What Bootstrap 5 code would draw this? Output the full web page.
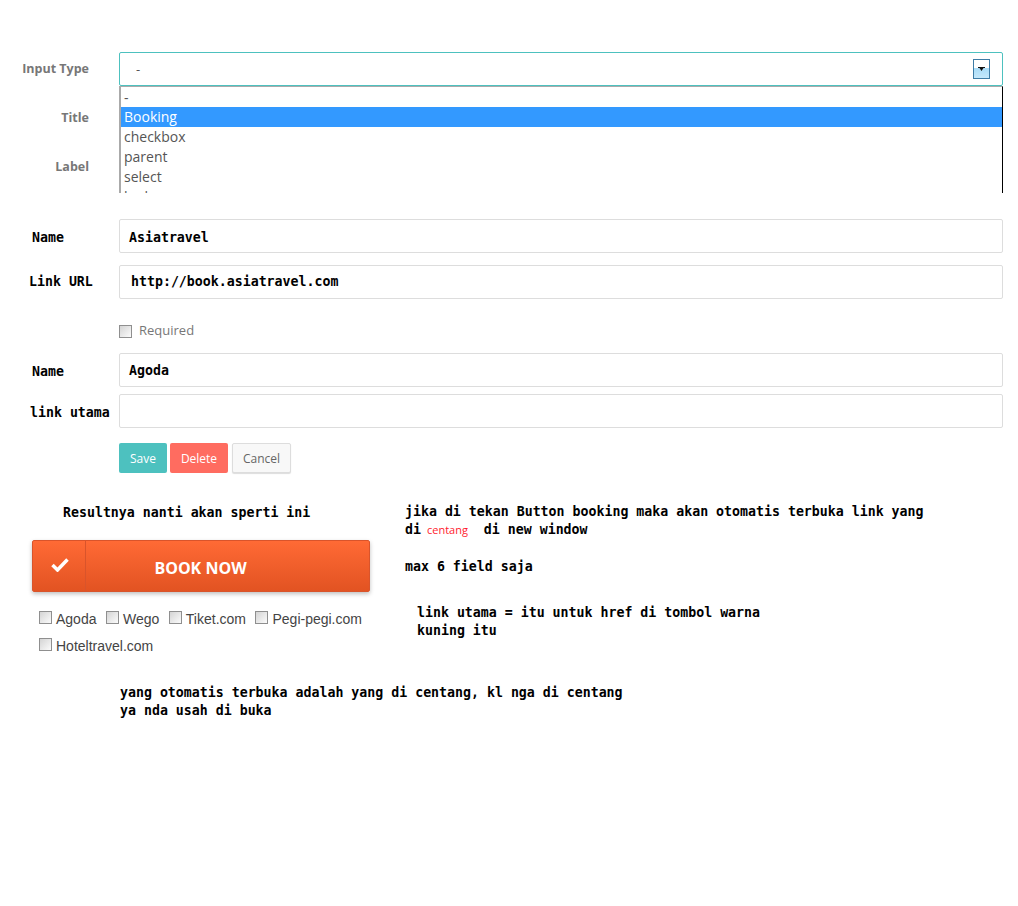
<!DOCTYPE html>
<html lang="id">
<head>
  <meta charset="UTF-8">
  <meta name="viewport" content="width=device-width, initial-scale=1.0">
  <title>Input Type</title>
  <link href="https://cdn.jsdelivr.net/npm/bootstrap@5.3.3/dist/css/bootstrap.min.css" rel="stylesheet">
  <style>
    body { font-family: "Open Sans", sans-serif; color: #555; background: #fff; }
    .sheet { padding: 52px 15px 0 0; }
    .field-row { display: flex; margin-bottom: 15px; }
    .gap-twelve { margin-bottom: 12px; }
    .gap-seven { margin-bottom: 7px; }
    .field-label { width: 89px; margin-right: 30px; text-align: right; font-size: 12.5px; font-weight: 700; color: #777; line-height: 33px; flex: none; }
    .code-label { width: 119px; height: 34px; margin: 0; padding-left: 32px; text-align: left; line-height: 37px; }
    .url-label { padding-left: 29px; line-height: 33px; }
    .utama-label { padding-left: 30px; }
    .field-box { flex: 1; height: 34px; border: 1px solid #ddd; border-radius: 2px; background: #fff; padding: 0 9px; line-height: 33px; }
    .first-box { line-height: 35px; }
    .url-box { padding-left: 11px; line-height: 31px; }
    .mono { font-family: "DejaVu Sans Mono", monospace; font-weight: 700; font-size: 13.26px; color: #000; }
    .drop-wrap { position: relative; height: 167px; }
    .drop-toggle { border-color: #4dc1bf; padding-left: 16px; font-size: 13px; color: #555; position: relative; }
    .drop-arrow { position: absolute; top: 6px; right: 12px; width: 17px; height: 20px; border: 1px solid #3e7ca6; background: linear-gradient(#fff 45%, #a9dcf8 45%, #c4e8fb); }
    .drop-arrow svg { display: block; margin: 7px auto 0; }
    .drop-list { position: absolute; top: 34px; left: 119px; width: 884px; height: 107px; overflow: hidden; border: solid #000; border-width: 1px 1px 0 0; border-top-color: #aaa; border-left: 2px solid #aaa; background: #fff; font-size: 14px; line-height: 19px; color: #555; }
    .drop-list div { height: 20px; padding-left: 3px; }
    .drop-list .blank-item { line-height: 21px; }
    .drop-list .picked { background: #3399ff; color: #fff; }
    .req-row { display: flex; align-items: center; padding-left: 119px; height: 22px; margin: 21px 0 11px; font-size: 13px; color: #777; gap: 7px; }
    .grey-check { width: 13px; height: 13px; border: 1px solid #8f8f8f; background: linear-gradient(135deg, #d4d4d4, #fbfbfb); flex: none; }
    .btn-row { display: flex; gap: 3px; padding-left: 119px; }
    .btn-row .btn { font-size: 12px; height: 30px; padding: 0 10px; line-height: 31px; border-radius: 2px; border: 0; }
    .btn-save { background: #4dc1bf; color: #fff; width: 48px; }
    .btn-delete { background: #ff6c60; color: #fff; width: 58px; }
    .btn-row .btn-cancel { background: #f8f8f8; color: #666; width: 59px; border: 1px solid #ddd; line-height: 29px; margin-left: 1px; box-shadow: 0 1px 1px #ddd; }
    .result-row { display: flex; margin-top: 29px; }
    .left-pane { width: 338px; margin-left: 32px; margin-right: 35px; flex: none; }
    .right-pane { flex: 1; line-height: 18px; padding-top: 1px; }
    .result-title { padding: 2px 0 0 31px; line-height: 18px; margin-bottom: 18px; }
    .book-btn { display: flex; height: 52px; border-radius: 2px; border: 1px solid #d9542b; background: linear-gradient(#ff6a35, #e25322); box-shadow: 0 2px 4px rgba(0,0,0,.25); color: #fff; }
    .book-tick { width: 53px; border-right: 1px solid #d9542b; display: flex; align-items: center; justify-content: center; flex: none; padding: 0 0 3px 2px; }
    .book-text { flex: 1; text-align: center; font-family: "Open Sans", sans-serif; font-size: 16px; font-weight: 700; line-height: 55px; padding-right: 54px; }
    .site-list { display: flex; flex-wrap: wrap; gap: 0 9.5px; padding: 14px 0 0 7px; font-family: "Liberation Sans", sans-serif; font-weight: 400; font-size: 14px; color: #444; }
    .site-list span { display: flex; align-items: center; gap: 4px; height: 27px; }
    .site-list .grey-check { margin-top: -4px; }
    .red-note { color: #ff1a2e; font-family: "Open Sans", sans-serif; font-weight: 400; font-size: 11px; margin-left: -2px; }
    .note-gap { margin-top: 19px; }
    .note-indent { margin-top: 28px; padding-left: 12px; width: 400px; }
    .end-note { margin: 24px 0 0 120px; line-height: 18px; }
  </style>
</head>
<body>
  <div class="sheet">
    <div class="drop-wrap">
      <div class="field-row">
        <div class="field-label">Input Type</div>
        <div class="field-box drop-toggle">-
          <span class="drop-arrow"><svg width="7" height="4" viewBox="0 0 7 4"><path d="M0 0h7v1H5.500L3.500 4 1.500 1H0z" fill="#111"/></svg></span>
        </div>
      </div>
      <div class="field-row"><div class="field-label">Title</div><div class="field-box"></div></div>
      <div class="field-row"><div class="field-label">Label</div><div class="field-box"></div></div>
      <div class="drop-list">
        <div class="blank-item">-</div>
        <div class="picked">Booking</div>
        <div>checkbox</div>
        <div>parent</div>
        <div>select</div>
        <div>lookup</div>
      </div>
    </div>

    <div class="field-row gap-twelve mono">
      <div class="field-label code-label mono">Name</div>
      <div class="field-box first-box">Asiatravel</div>
    </div>
    <div class="field-row mono">
      <div class="field-label code-label url-label mono">Link URL</div>
      <div class="field-box url-box">http://book.asiatravel.com</div>
    </div>
    <div class="req-row"><span class="grey-check"></span>Required</div>
    <div class="field-row gap-seven mono">
      <div class="field-label code-label mono">Name</div>
      <div class="field-box">Agoda</div>
    </div>
    <div class="field-row mono">
      <div class="field-label code-label utama-label mono">link utama</div>
      <div class="field-box"></div>
    </div>
    <div class="btn-row">
      <button class="btn btn-save">Save</button>
      <button class="btn btn-delete">Delete</button>
      <button class="btn btn-cancel">Cancel</button>
    </div>

    <div class="result-row mono">
      <div class="left-pane">
        <div class="result-title">Resultnya nanti akan sperti ini</div>
        <div class="book-btn">
          <div class="book-tick"><svg width="18" height="15" viewBox="0 0 18 15"><path d="M1.500 8l5 5L16.500 2.500" fill="none" stroke="#fff" stroke-width="3.500"/></svg></div>
          <div class="book-text">BOOK NOW</div>
        </div>
        <div class="site-list">
          <span><i class="grey-check"></i>Agoda</span>
          <span><i class="grey-check"></i>Wego</span>
          <span><i class="grey-check"></i>Tiket.com</span>
          <span><i class="grey-check"></i>Pegi-pegi.com</span>
          <span><i class="grey-check"></i>Hoteltravel.com</span>
        </div>
      </div>
      <div class="right-pane">
        <div>jika di tekan Button booking maka akan otomatis terbuka link yang<br>di <span class="red-note">centang</span> &nbsp;di new window</div>
        <div class="note-gap">max 6 field saja</div>
        <div class="note-indent">link utama = itu untuk href di tombol warna kuning itu</div>
      </div>
    </div>
    <div class="end-note mono">yang otomatis terbuka adalah yang di centang, kl nga di centang<br>ya nda usah di buka</div>
  </div>
  <script src="https://cdn.jsdelivr.net/npm/bootstrap@5.3.3/dist/js/bootstrap.bundle.min.js"></script>
</body>
</html>
